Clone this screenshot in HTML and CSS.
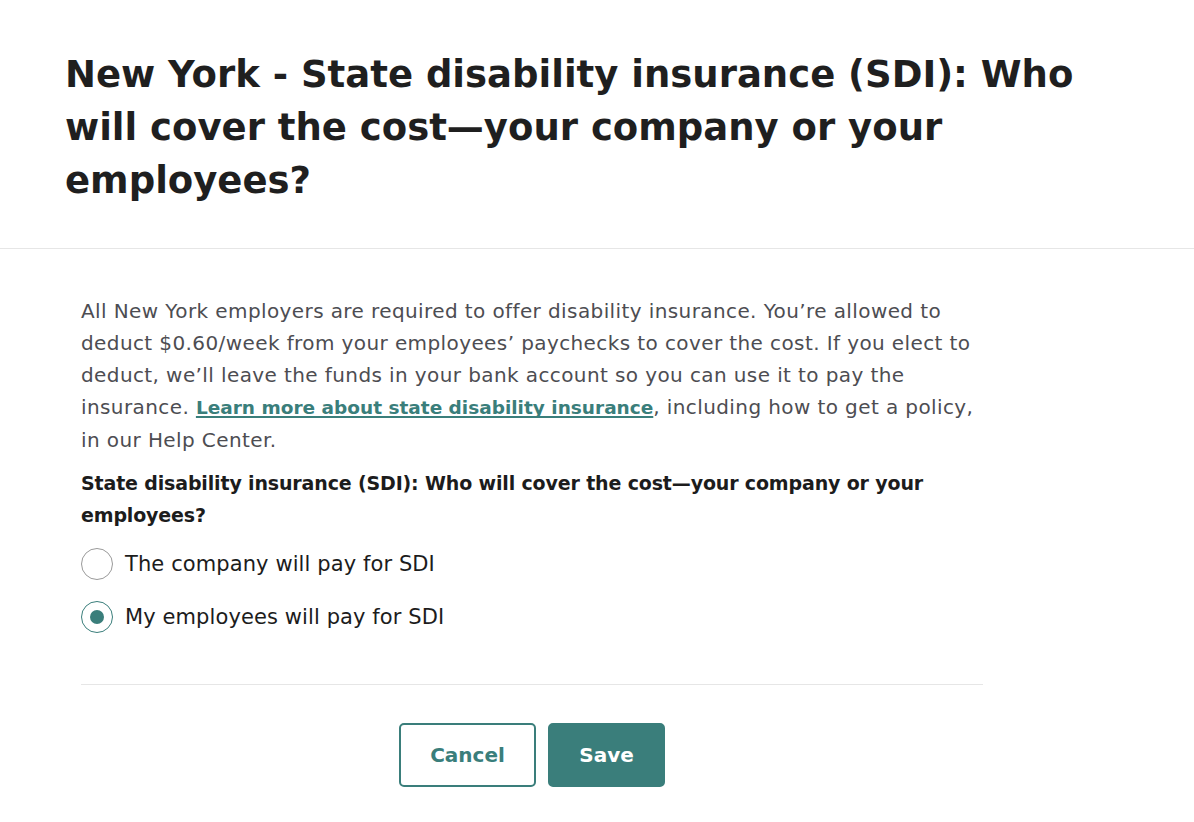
FILE: index.html
```html
<!DOCTYPE HTML>
<html>
<head>
  <meta charset="utf-8">
  <link rel="stylesheet" href="styles.css">
  <title>State disability insurance</title>
</head>
<body>
<div class="header">
  <h1 class="title">New York - State disability insurance (SDI): Who will cover the cost&mdash;your company or your employees?</h1>
</div>
<div class="content">
  <p class="intro">All New York employers are required to offer disability insurance. You&rsquo;re allowed to deduct $0.60/week from your employees&rsquo; paychecks to cover the cost. If you elect to deduct, we&rsquo;ll leave the funds in your bank account so you can use it to pay the insurance. <a href="#" class="link">Learn more about state disability insurance</a>, including how to get a policy, in our Help Center.</p>
  <div class="question">State disability insurance (SDI): Who will cover the cost&mdash;your company or your employees?</div>
  <div class="options">
    <label class="option">
      <span class="radio"></span>
      <span class="label">The company will pay for SDI</span>
    </label>
    <label class="option">
      <span class="radio checked"></span>
      <span class="label">My employees will pay for SDI</span>
    </label>
  </div>
  <div class="divider"></div>
  <div class="actions">
    <button type="button" class="button cancel">Cancel</button>
    <button type="button" class="button save">Save</button>
  </div>
</div>
</body>
</html>
```

FILE: styles.css
```css
html, body {
  margin: 0;
  padding: 0;
  background: #fff;
}

body {
  font-family: "DejaVu Sans", "Liberation Sans", sans-serif;
  color: #1c1c1c;
}

.header {
  padding: 48px 65px 41px;
  border-bottom: 1px solid #e6e6e6;
}

.title {
  margin: 0;
  font-size: 37px;
  line-height: 53px;
  font-weight: bold;
  color: #1f1f1f;
  max-width: 1040px;
}

.content {
  width: 902px;
  margin-left: 81px;
  padding-top: 46px;
}

.intro {
  margin: 0;
  font-size: 20px;
  line-height: 32px;
  letter-spacing: 0.4px;
  color: #4d4d52;
}

.link {
  color: #3a7e7b;
  font-size: 18.5px;
  font-weight: bold;
  letter-spacing: 0;
  text-decoration: underline;
  text-decoration-thickness: 2px;
  text-decoration-skip-ink: none;
  text-underline-offset: 2px;
}

.question {
  margin-top: 11px;
  font-size: 19px;
  line-height: 32px;
  letter-spacing: -0.15px;
  font-weight: bold;
  color: #1c1c1c;
}

.options {
  margin-top: 17px;
  display: flex;
  flex-direction: column;
  gap: 21px;
}

.option {
  display: flex;
  align-items: center;
  height: 32px;
}

.radio {
  width: 30px;
  height: 30px;
  border: 1px solid #9a9a9a;
  border-radius: 50%;
  box-sizing: content-box;
  display: flex;
  align-items: center;
  justify-content: center;
  margin-right: 12px;
}

.radio.checked {
  border-color: #3a7e7b;
}

.radio.checked::after {
  content: "";
  width: 14px;
  height: 14px;
  border-radius: 50%;
  background: #3a7e7b;
}

.label {
  font-size: 21px;
  letter-spacing: 0.1px;
  color: #1c1c1c;
}

.divider {
  margin-top: 51px;
  border-top: 1px solid #e6e6e6;
}

.actions {
  display: flex;
  justify-content: center;
  gap: 12px;
  padding-top: 38px;
}

.button {
  height: 64px;
  font-family: "DejaVu Sans", "Liberation Sans", sans-serif;
  font-size: 20px;
  font-weight: bold;
  border-radius: 5px;
  cursor: pointer;
}

.cancel {
  width: 137px;
  background: #fff;
  color: #3a7e7b;
  border: 2px solid #3a7e7b;
}

.save {
  width: 117px;
  background: #3a7e7b;
  color: #fff;
  border: 2px solid #3a7e7b;
}
```
